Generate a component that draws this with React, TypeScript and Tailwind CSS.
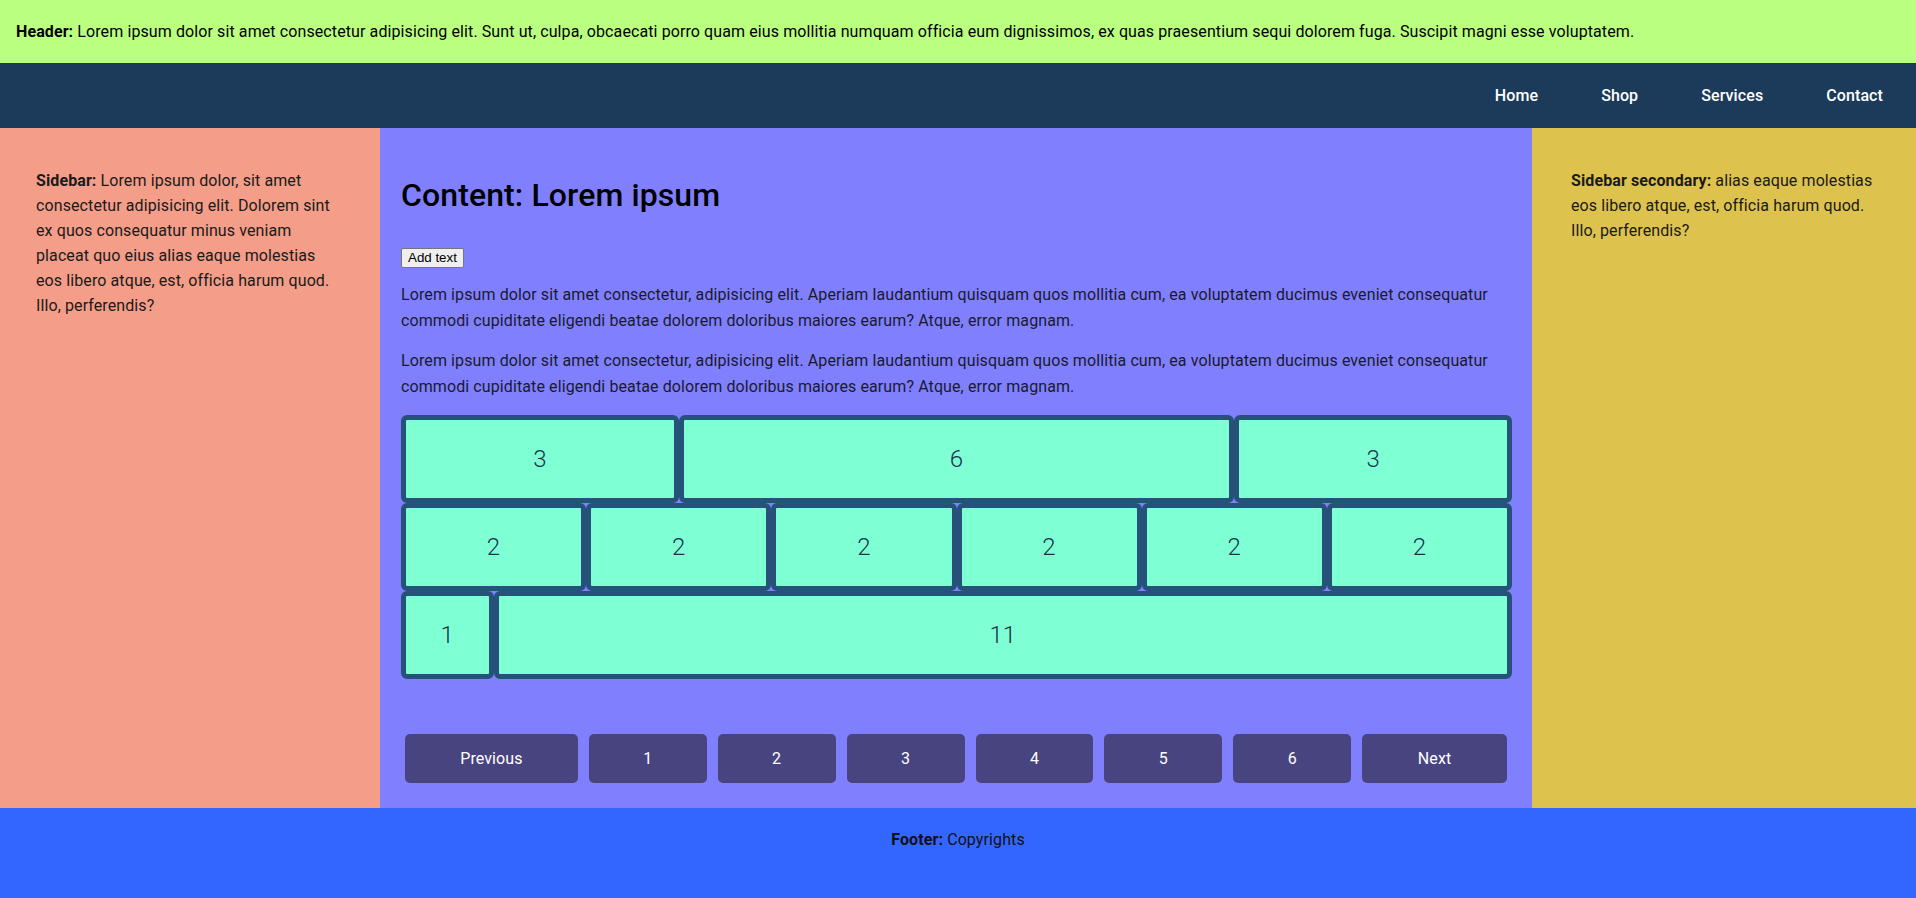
import React from "react";

const font = { fontFamily: "Roboto, 'Noto Sans', sans-serif", letterSpacing: "0.1px" };

function Cell({ span, n }: { span: string; n: string }) {
  return (
    <div
      className={`${span} h-[88px] bg-[#7fffd4] border-[5px] border-[#26527a] rounded-[6px] flex items-center justify-center text-[24px] font-light text-[#17334a]`}
    >
      {n}
    </div>
  );
}

export default function App() {
  const pages = ["1", "2", "3", "4", "5", "6"];
  return (
    <div className="w-[1916px] text-[16px] text-black" style={font}>
      <header className="h-[63px] bg-[#bbff80] flex items-center px-[16px]">
        <p>
          <strong className="font-bold">Header:</strong> Lorem ipsum dolor sit amet consectetur adipisicing elit. Sunt ut, culpa, obcaecati porro quam eius mollitia numquam officia eum dignissimos, ex quas praesentium sequi dolorem fuga. Suscipit magni esse voluptatem.
        </p>
      </header>
      <nav className="h-[65px] bg-[#1c3b5a] flex items-center justify-end gap-[63px] pr-[33px] text-white font-medium">
        <span>Home</span>
        <span>Shop</span>
        <span>Services</span>
        <span>Contact</span>
      </nav>
      <main className="flex h-[680px]">
        <aside className="w-[380px] shrink-0 bg-[#f49d88] pt-[40px] pl-[36px] pr-[40px] leading-[25px] text-[#1a1a1a]">
          <p>
            <strong className="font-bold">Sidebar:</strong> Lorem ipsum dolor, sit amet consectetur adipisicing elit. Dolorem sint ex quos consequatur minus veniam placeat quo eius alias eaque molestias eos libero atque, est, officia harum quod. Illo, perferendis?
          </p>
        </aside>
        <section className="w-[1152px] shrink-0 bg-[#8080ff] px-[21px] pt-[48px] flex flex-col">
          <h1 className="text-[32px] leading-[38px] font-medium">Content: Lorem ipsum</h1>
          <div className="mt-[31px]">
            <button
              className="h-[20px] px-[6px] text-[13.33px] leading-none bg-[#efefef] border border-[#767676] rounded-[2px] text-black"
              style={{ fontFamily: "'Liberation Sans', Arial, sans-serif", letterSpacing: 0 }}
            >
              Add text
            </button>
          </div>
          <p className="mt-[13px] leading-[25.5px] text-[#1a1a2e]">
            Lorem ipsum dolor sit amet consectetur, adipisicing elit. Aperiam laudantium quisquam quos mollitia cum, ea voluptatem ducimus eveniet consequatur commodi cupiditate eligendi beatae dolorem doloribus maiores earum? Atque, error magnam.
          </p>
          <p className="mt-[15px] leading-[25.5px] text-[#1a1a2e]">
            Lorem ipsum dolor sit amet consectetur, adipisicing elit. Aperiam laudantium quisquam quos mollitia cum, ea voluptatem ducimus eveniet consequatur commodi cupiditate eligendi beatae dolorem doloribus maiores earum? Atque, error magnam.
          </p>
          <div className="mt-[16px] grid grid-cols-12 w-[1111px]">
            <Cell span="col-span-3" n="3" />
            <Cell span="col-span-6" n="6" />
            <Cell span="col-span-3" n="3" />
            <Cell span="col-span-2" n="2" />
            <Cell span="col-span-2" n="2" />
            <Cell span="col-span-2" n="2" />
            <Cell span="col-span-2" n="2" />
            <Cell span="col-span-2" n="2" />
            <Cell span="col-span-2" n="2" />
            <Cell span="col-span-1" n="1" />
            <Cell span="col-span-11" n="11" />
          </div>
          <div className="mt-[55px] flex gap-[11px] px-[4px]">
            <button className="w-[173px] h-[49px] rounded-[5px] bg-[#48447f] text-white">Previous</button>
            {pages.map((p) => (
              <button key={p} className="w-[118px] h-[49px] rounded-[5px] bg-[#48447f] text-white">
                {p}
              </button>
            ))}
            <button className="w-[145px] h-[49px] rounded-[5px] bg-[#48447f] text-white">Next</button>
          </div>
        </section>
        <aside className="flex-1 bg-[#dec24e] pt-[40px] pl-[39px] pr-[36px] leading-[25px] text-[#1a1a1a]">
          <p>
            <strong className="font-bold">Sidebar secondary:</strong> alias eaque molestias eos libero atque, est, officia harum quod. Illo, perferendis?
          </p>
        </aside>
      </main>
      <footer className="h-[90px] bg-[#3366ff] flex justify-center pt-[20px] leading-[24px] text-[#111]">
        <p>
          <strong className="font-bold">Footer:</strong> Copyrights
        </p>
      </footer>
    </div>
  );
}
